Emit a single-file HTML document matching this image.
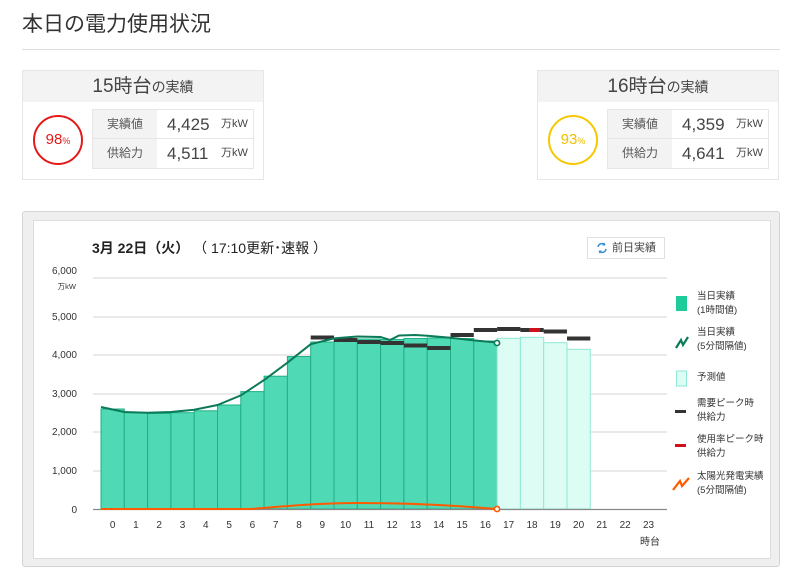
<!DOCTYPE html>
<html><head><meta charset="utf-8"><style>
*{margin:0;padding:0;box-sizing:border-box}
body{width:800px;height:577px;background:#fff;font-family:"Liberation Sans","Noto Sans CJK JP",sans-serif;color:#333;position:relative;overflow:hidden}
.a{position:absolute}
.card{position:absolute;top:70px;width:242px;height:110px;border:1px solid #e6e6e6;background:#fff}
.card .hd{height:31px;background:#f3f3f3;text-align:center;font-size:19px;line-height:31px;color:#444}
.card .hd small{font-size:14px}
.circ{position:absolute;left:10px;top:44px;width:50px;height:50px;border-radius:50%;border:2px solid;text-align:center;line-height:46px;font-size:15px}
.circ small{font-size:9px}
.tb{position:absolute;left:69px;top:38px;width:162px;height:60px;border:1px solid #e6e6e6}
.row{height:29px;display:flex;border-bottom:1px solid #e6e6e6}
.row:last-child{border-bottom:none}
.lb{width:64px;background:#f3f3f3;font-size:12px;text-align:center;line-height:29px;color:#555}
.vl{font-size:17px;line-height:29px;padding-left:10px;width:64px;color:#444}
.un{font-size:11px;line-height:29px;color:#444}
.lg{position:absolute;left:697px;font-size:9.5px;line-height:14px;color:#333}
</style></head><body>
<div class="a" style="left:22px;top:8px;font-size:21px;color:#333">本日の電力使用状況</div>
<div class="a" style="left:22px;top:49px;width:758px;height:1px;background:#ddd"></div>

<div class="card" style="left:22px">
<div class="hd">15時台<small>の実績</small></div>
<div class="circ" style="border-color:#e41a1a;color:#e41a1a">98<small>%</small></div>
<div class="tb"><div class="row"><div class="lb">実績値</div><div class="vl">4,425</div><div class="un">万kW</div></div>
<div class="row"><div class="lb">供給力</div><div class="vl">4,511</div><div class="un">万kW</div></div></div>
</div>
<div class="card" style="left:537px">
<div class="hd">16時台<small>の実績</small></div>
<div class="circ" style="border-color:#f5c800;color:#f0c000">93<small>%</small></div>
<div class="tb"><div class="row"><div class="lb">実績値</div><div class="vl">4,359</div><div class="un">万kW</div></div>
<div class="row"><div class="lb">供給力</div><div class="vl">4,641</div><div class="un">万kW</div></div></div>
</div>

<div class="a" style="left:22px;top:211px;width:758px;height:356px;background:#efefef;border:1px solid #d4d4d4;border-radius:3px"></div>
<div class="a" style="left:33px;top:220px;width:738px;height:339px;background:#fff;border:1px solid #ddd"></div>
<div class="a" style="left:92px;top:238px;font-size:14px;color:#222;white-space:pre"><b>3月 22日（火）</b> （ 17:10更新･速報 ）</div>
<div class="a" style="left:587px;top:237px;width:78px;height:22px;border:1px solid #e0e0e0;font-size:11px;line-height:20px;padding-left:24px;color:#444">前日実績</div>
<svg class="a" style="left:596px;top:242px" width="12" height="12" viewBox="0 0 12 12"><path d="M2 5a4 4 0 0 1 7-2M10 7a4 4 0 0 1-7 2" stroke="#3a8fd0" stroke-width="1.5" fill="none"/><path d="M9 0.5v3h-3zM3 11.5v-3h3z" fill="#3a8fd0"/></svg>

<svg class="a" style="left:0;top:0" width="800" height="577">
<g font-size="10" fill="#333" text-anchor="end" font-family="Liberation Sans,sans-serif">
<text x="77" y="274">6,000</text><text x="76" y="289" font-size="7.5">万kW</text>
<text x="77" y="320">5,000</text><text x="77" y="358">4,000</text><text x="77" y="397">3,000</text>
<text x="77" y="435">2,000</text><text x="77" y="474">1,000</text><text x="77" y="513">0</text>
</g>
<g stroke="#ddd" stroke-width="1.2">
<line x1="93" x2="667" y1="278" y2="278"/><line x1="93" x2="667" y1="317" y2="317"/><line x1="93" x2="667" y1="355" y2="355"/><line x1="93" x2="667" y1="394" y2="394"/><line x1="93" x2="667" y1="432" y2="432"/><line x1="93" x2="667" y1="471" y2="471"/>
</g>
<g fill="#50d9b5" stroke="#1fb085" stroke-width="1">
<rect x="101" y="409" width="23.3" height="100"/>
<rect x="124.3" y="412.7" width="23.3" height="96.3"/>
<rect x="147.6" y="413.5" width="23.3" height="95.5"/>
<rect x="170.9" y="412.7" width="23.3" height="96.3"/>
<rect x="194.2" y="410.8" width="23.3" height="98.2"/>
<rect x="217.5" y="405" width="23.3" height="104"/>
<rect x="240.8" y="391.6" width="23.3" height="117.4"/>
<rect x="264.1" y="376.2" width="23.3" height="132.8"/>
<rect x="287.4" y="356.5" width="23.3" height="152.5"/>
<rect x="310.7" y="342" width="23.3" height="167"/>
<rect x="334" y="339.5" width="23.3" height="169.5"/>
<rect x="357.3" y="339" width="23.3" height="170"/>
<rect x="380.6" y="339.5" width="23.3" height="169.5"/>
<rect x="403.9" y="338.5" width="23.3" height="170.5"/>
<rect x="427.2" y="338" width="23.3" height="171"/>
<rect x="450.5" y="338.5" width="23.3" height="170.5"/>
<rect x="473.8" y="341" width="23.3" height="168"/>
</g>
<g fill="#dcfcf4" stroke="#8fe9d5" stroke-width="1">
<rect x="497.1" y="338.3" width="23.3" height="170.7"/>
<rect x="520.4" y="337.3" width="23.3" height="171.7"/>
<rect x="543.7" y="342.7" width="23.3" height="166.3"/>
<rect x="567" y="349.3" width="23.3" height="159.7"/>
</g>
<line x1="93" x2="667" y1="509.5" y2="509.5" stroke="#888" stroke-width="1.2"/>
<g fill="#333">
<rect x="310.7" y="335.5" width="23.3" height="4"/><rect x="334" y="338" width="23.3" height="4"/><rect x="357.3" y="340" width="23.3" height="4"/><rect x="380.6" y="341" width="23.3" height="4"/><rect x="403.9" y="343.5" width="23.3" height="4"/><rect x="427.2" y="346" width="23.3" height="4"/><rect x="450.5" y="333" width="23.3" height="4"/><rect x="473.8" y="328" width="23.3" height="4"/><rect x="497.1" y="327" width="23.3" height="4"/><rect x="520.4" y="328" width="23.3" height="4"/><rect x="543.7" y="329.5" width="23.3" height="4"/><rect x="567" y="336.5" width="23.3" height="4"/>
<rect x="529" y="328" width="11" height="4" fill="#d0101a"/>
</g>
<path d="M101 407 L124.3 412 L147.6 412.7 L170.9 412 L194.2 409.7 L217.5 405 L240.8 395.4 L264.1 380 L287.4 362.7 L310.7 344.2 L334 338.4 L357.3 336.5 L380.6 337 L390 340 L399 335.5 L415.6 335 L427.2 335.7 L450.5 337.7 L473.8 340.4 L497 342.5" fill="none" stroke="#0b7a58" stroke-width="2"/>
<circle cx="497" cy="343" r="2.6" fill="#fff" stroke="#0b7a58" stroke-width="1.6"/>
<path d="M101 509 L250 509 C290 506 320 503 357 503 C400 503 450 505 497 509" fill="none" stroke="#ff5a00" stroke-width="2"/>
<circle cx="497" cy="509" r="2.6" fill="#fff" stroke="#ff5a00" stroke-width="1.6"/>
<g font-size="10" fill="#333" text-anchor="middle" font-family="Liberation Sans,sans-serif">
<text x="112.6" y="528">0</text><text x="135.9" y="528">1</text><text x="159.2" y="528">2</text><text x="182.5" y="528">3</text><text x="205.8" y="528">4</text><text x="229.1" y="528">5</text><text x="252.4" y="528">6</text><text x="275.7" y="528">7</text><text x="299" y="528">8</text><text x="322.3" y="528">9</text><text x="345.6" y="528">10</text><text x="368.9" y="528">11</text><text x="392.2" y="528">12</text><text x="415.5" y="528">13</text><text x="438.8" y="528">14</text><text x="462.1" y="528">15</text><text x="485.4" y="528">16</text><text x="508.7" y="528">17</text><text x="532" y="528">18</text><text x="555.3" y="528">19</text><text x="578.6" y="528">20</text><text x="601.9" y="528">21</text><text x="625.2" y="528">22</text><text x="648.5" y="528">23</text>
<text x="650" y="545">時台</text>
</g>
<rect x="676" y="296" width="11" height="15" fill="#1fcb98"/>
<path d="M676 348 L681 340 L683 345 L688 337" fill="none" stroke="#0b7a58" stroke-width="2.2"/>
<rect x="676.5" y="371" width="10" height="15" fill="#dcfcf4" stroke="#8fe9d5"/>
<rect x="675" y="410" width="11" height="3" fill="#333"/>
<rect x="675" y="444" width="11" height="3" fill="#d0101a"/>
<path d="M673 490 L680 481 L682 486 L689 478" fill="none" stroke="#ff5a00" stroke-width="2.2"/>
</svg>
<div class="lg" style="top:290px">当日実績<br>(1時間値)</div>
<div class="lg" style="top:326px">当日実績<br>(5分間隔値)</div>
<div class="lg" style="top:371px">予測値</div>
<div class="lg" style="top:397px">需要ピーク時<br>供給力</div>
<div class="lg" style="top:433px">使用率ピーク時<br>供給力</div>
<div class="lg" style="top:470px">太陽光発電実績<br>(5分間隔値)</div>
</body></html>
